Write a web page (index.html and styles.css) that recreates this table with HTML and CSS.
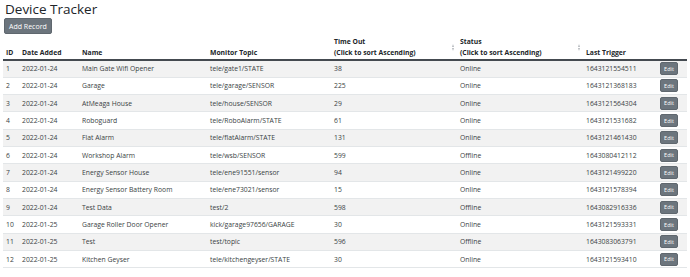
FILE: index.html
```html
<!DOCTYPE html>
<html lang="en">
<head>
    <meta charset="UTF-8">
    <meta name="viewport" content="width=device-width, initial-scale=1.0">
    <title>Device Tracker</title>
    <link rel="stylesheet" href="styles.css">
</head>
<body>
    <div class="container">
        <h1>Device Tracker</h1>
        <button class="btn btn-add">Add Record</button>

        <table class="device-table">
            <colgroup>
                <col class="col-id">
                <col class="col-date">
                <col class="col-name">
                <col class="col-topic">
                <col class="col-timeout">
                <col class="col-status">
                <col class="col-trigger">
                <col class="col-edit">
            </colgroup>
            <thead>
                <tr>
                    <th>ID</th>
                    <th>Date Added</th>
                    <th>Name</th>
                    <th>Monitor Topic</th>
                    <th class="sortable">Time Out<br>(Click to sort Ascending)<span class="sort-icon"></span></th>
                    <th class="sortable">Status<br>(Click to sort Ascending)<span class="sort-icon"></span></th>
                    <th>Last Trigger</th>
                    <th></th>
                </tr>
            </thead>
            <tbody>
                <tr><td>1</td><td>2022-01-24</td><td>Main Gate Wifi Opener</td><td>tele/gate1/STATE</td><td>38</td><td>Online</td><td>1643121554511</td><td><button class="btn btn-edit">Edit</button></td></tr>
                <tr><td>2</td><td>2022-01-24</td><td>Garage</td><td>tele/garage/SENSOR</td><td>225</td><td>Online</td><td>1643121368183</td><td><button class="btn btn-edit">Edit</button></td></tr>
                <tr><td>3</td><td>2022-01-24</td><td>AtMeaga House</td><td>tele/house/SENSOR</td><td>29</td><td>Online</td><td>1643121564304</td><td><button class="btn btn-edit">Edit</button></td></tr>
                <tr><td>4</td><td>2022-01-24</td><td>Roboguard</td><td>tele/RoboAlarm/STATE</td><td>61</td><td>Online</td><td>1643121531682</td><td><button class="btn btn-edit">Edit</button></td></tr>
                <tr><td>5</td><td>2022-01-24</td><td>Flat Alarm</td><td>tele/flatAlarm/STATE</td><td>131</td><td>Online</td><td>1643121461430</td><td><button class="btn btn-edit">Edit</button></td></tr>
                <tr><td>6</td><td>2022-01-24</td><td>Workshop Alarm</td><td>tele/wsb/SENSOR</td><td>599</td><td>Offline</td><td>1643080412112</td><td><button class="btn btn-edit">Edit</button></td></tr>
                <tr><td>7</td><td>2022-01-24</td><td>Energy Sensor House</td><td>tele/ene91551/sensor</td><td>94</td><td>Online</td><td>1643121499220</td><td><button class="btn btn-edit">Edit</button></td></tr>
                <tr><td>8</td><td>2022-01-24</td><td>Energy Sensor Battery Room</td><td>tele/ene73021/sensor</td><td>15</td><td>Online</td><td>1643121578394</td><td><button class="btn btn-edit">Edit</button></td></tr>
                <tr><td>9</td><td>2022-01-24</td><td>Test Data</td><td>test/2</td><td>598</td><td>Offline</td><td>1643082916336</td><td><button class="btn btn-edit">Edit</button></td></tr>
                <tr><td>10</td><td>2022-01-25</td><td>Garage Roller Door Opener</td><td>kick/garage97656/GARAGE</td><td>30</td><td>Online</td><td>1643121593331</td><td><button class="btn btn-edit">Edit</button></td></tr>
                <tr><td>11</td><td>2022-01-25</td><td>Test</td><td>test/topic</td><td>596</td><td>Offline</td><td>1643083063791</td><td><button class="btn btn-edit">Edit</button></td></tr>
                <tr><td>12</td><td>2022-01-25</td><td>Kitchen Geyser</td><td>tele/kitchengeyser/STATE</td><td>30</td><td>Online</td><td>1643121593410</td><td><button class="btn btn-edit">Edit</button></td></tr>
            </tbody>
        </table>
    </div>
</body>
</html>
```

FILE: styles.css
```css
body {
    font-family: "Open Sans", "Noto Sans", sans-serif;
    margin: 0;
    padding: 0 3px;
    background-color: #fff;
    color: #3a3f44;
}
h1 {
    font-size: 13.5px;
    font-weight: 400;
    line-height: 19px;
    margin: 0 0 -1px 2px;
    color: #212529;
}
.btn {
    background-color: #6c757d;
    color: #fff;
    border: 1px solid #5f676e;
    border-radius: 2px;
    font-family: inherit;
    cursor: pointer;
}
.btn-add {
    display: block;
    font-size: 7px;
    height: 16px;
    padding: 0 4px;
    margin-left: 1px;
}
.device-table {
    width: 684px;
    margin-top: 1px;
    border-collapse: collapse;
    table-layout: fixed;
    font-size: 6.8px;
}
.col-id { width: 16px; }
.col-date { width: 60px; }
.col-name { width: 128px; }
.col-topic { width: 124px; }
.col-timeout { width: 126px; }
.col-status { width: 126px; }
.col-trigger { width: 73px; }
.col-edit { width: 31px; }
.device-table th {
    text-align: left;
    vertical-align: bottom;
    font-weight: 700;
    color: #212529;
    line-height: 11px;
    padding: 1px 3px 1px;
    border-bottom: 2px solid #444a50;
    white-space: nowrap;
}
.device-table th.sortable {
    position: relative;
}
.sort-icon {
    position: absolute;
    right: 2px;
    top: 9px;
    width: 3px;
    height: 7px;
}
.sort-icon::before,
.sort-icon::after {
    content: "";
    position: absolute;
    left: 0;
    border-left: 1.5px solid transparent;
    border-right: 1.5px solid transparent;
}
.sort-icon::before {
    top: 0;
    border-bottom: 3px solid #b5b9bd;
}
.sort-icon::after {
    bottom: 0;
    border-top: 3px solid #b5b9bd;
}
.device-table td {
    height: 17.33px;
    padding: 0 3px;
    border-top: 1px solid #e3e6e8;
    white-space: nowrap;
    vertical-align: middle;
    box-sizing: border-box;
}
.device-table td:last-child {
    padding-left: 4px;
}
.device-table tbody tr:first-child td {
    border-top: none;
}
.device-table tbody tr:last-child td {
    border-bottom: 1px solid #e3e6e8;
}
.device-table tbody tr:nth-child(odd) {
    background-color: #f2f2f2;
}
.btn-edit {
    display: block;
    font-size: 5.5px;
    width: 18px;
    height: 13px;
    padding: 0;
}
```
